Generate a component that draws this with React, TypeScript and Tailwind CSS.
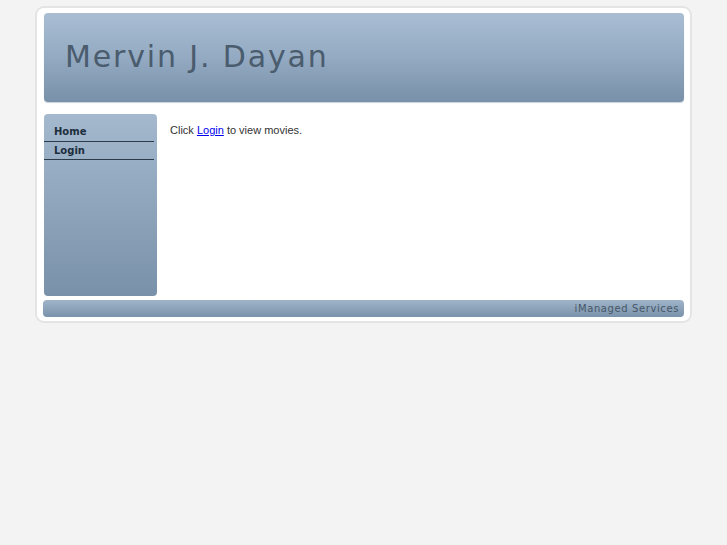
const App = () => {
  return (
    <div className="min-h-[545px] bg-[#f3f3f3] pt-[6px] font-['Liberation_Sans',Arial,sans-serif]">
      <div className="ml-[35px] w-[657px] rounded-[9px] border-2 border-[#e4e4e4] bg-white px-[6px] pt-[5px] pb-[4px]">
        {/* header */}
        <div className="ml-px flex h-[89px] items-center rounded-[4px] bg-gradient-to-b from-[#a9bed3] via-[#93aac2] to-[#7890a8] pl-[21px] shadow-[0_1px_1px_#c8d2dc]">
          <h1 className="mt-[-3px] text-[30px] font-normal tracking-[1.85px] text-[#4a5c6d] font-['DejaVu_Sans',sans-serif]">
            Mervin J. Dayan
          </h1>
        </div>

        <div className="mt-[12px] flex">
          {/* sidebar */}
          <div className="ml-px h-[182px] w-[113px] rounded-[4px] bg-gradient-to-b from-[#a4b9ce] to-[#7991a9] pt-[9px]">
            <ul className="mr-[3px] text-[10px] font-bold text-[#1d2e3d] font-['DejaVu_Sans',sans-serif]">
              <li className="border-b border-[#2b3b4a] pl-[10px] leading-[18px]">Home</li>
              <li className="border-b border-[#2b3b4a] pl-[10px] leading-[17px]">Login</li>
            </ul>
          </div>

          {/* content */}
          <div className="pl-[13px] pt-[8px] text-[11px] leading-[16px] text-[#333]">
            Click{" "}
            <a href="#" className="text-[#0000ee] underline">
              Login
            </a>{" "}
            to view movies.
          </div>
        </div>

        {/* footer */}
        <div className="mt-[4px] flex h-[17px] items-center justify-end rounded-[4px] bg-gradient-to-b from-[#9fb4c9] to-[#7a92aa] pr-[5px]">
          <span className="text-[10px] tracking-[0.6px] text-[#465768] font-['DejaVu_Sans',sans-serif]">
            iManaged Services
          </span>
        </div>
      </div>
    </div>
  );
};

export default App;
